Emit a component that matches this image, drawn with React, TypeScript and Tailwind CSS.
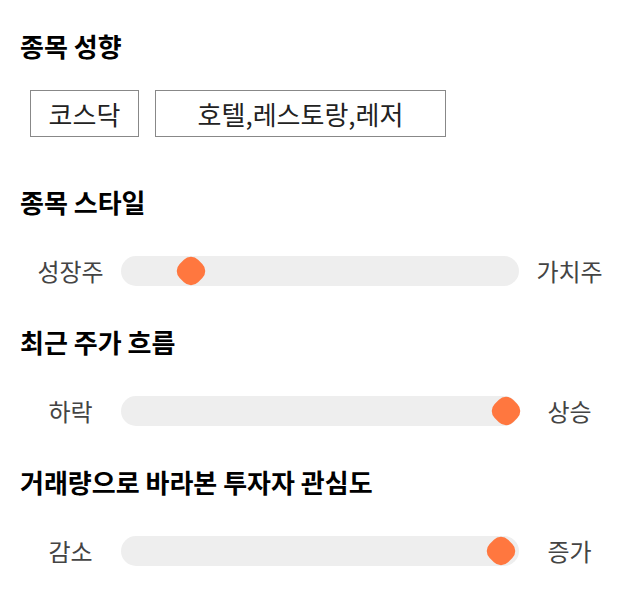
import React from 'react';

const font = { fontFamily: '"Noto Sans CJK KR", "Noto Sans", sans-serif' };

function Heading({ children, className = '' }: { children: React.ReactNode; className?: string }) {
  return <h2 className={`text-[26px] leading-[32px] font-bold text-black ${className}`}>{children}</h2>;
}

function Slider({ left, right, thumb, className = '' }: { left: string; right: string; thumb: number; className?: string }) {
  return (
    <div className={`flex items-center h-[30px] ${className}`}>
      <div className="w-[101px] text-center text-[24px] text-[#444]">{left}</div>
      <div className="relative flex-1 h-[30px] rounded-[15px] bg-[#eeeeee]">
        <div
          className="absolute top-[2px] w-[26px] h-[26px] rotate-45 rounded-[10px] bg-[#ff773f]"
          style={{ left: thumb }}
        />
      </div>
      <div className="w-[101px] text-center text-[24px] text-[#444]">{right}</div>
    </div>
  );
}

export default function App() {
  return (
    <div className="w-[640px] h-[606px] bg-white px-5 pt-[30px]" style={font}>
      <Heading>종목 성향</Heading>
      <div className="flex gap-4 ml-[10px] mt-[28px]">
        <div className="w-[109px] h-[47px] border border-[#888] flex items-center justify-center text-[26px] text-[#222]">
          코스닥
        </div>
        <div className="w-[291px] h-[47px] border border-[#888] flex items-center justify-center text-[26px] text-[#222]">
          호텔,레스토랑,레저
        </div>
      </div>

      <Heading className="mt-[49px]">종목 스타일</Heading>
      <Slider left="성장주" right="가치주" thumb={57} className="mt-[38px]" />

      <Heading className="mt-[40px]">최근 주가 흐름</Heading>
      <Slider left="하락" right="상승" thumb={372} className="mt-[38px]" />

      <Heading className="mt-[40px]">거래량으로 바라본 투자자 관심도</Heading>
      <Slider left="감소" right="증가" thumb={367} className="mt-[38px]" />
    </div>
  );
}
